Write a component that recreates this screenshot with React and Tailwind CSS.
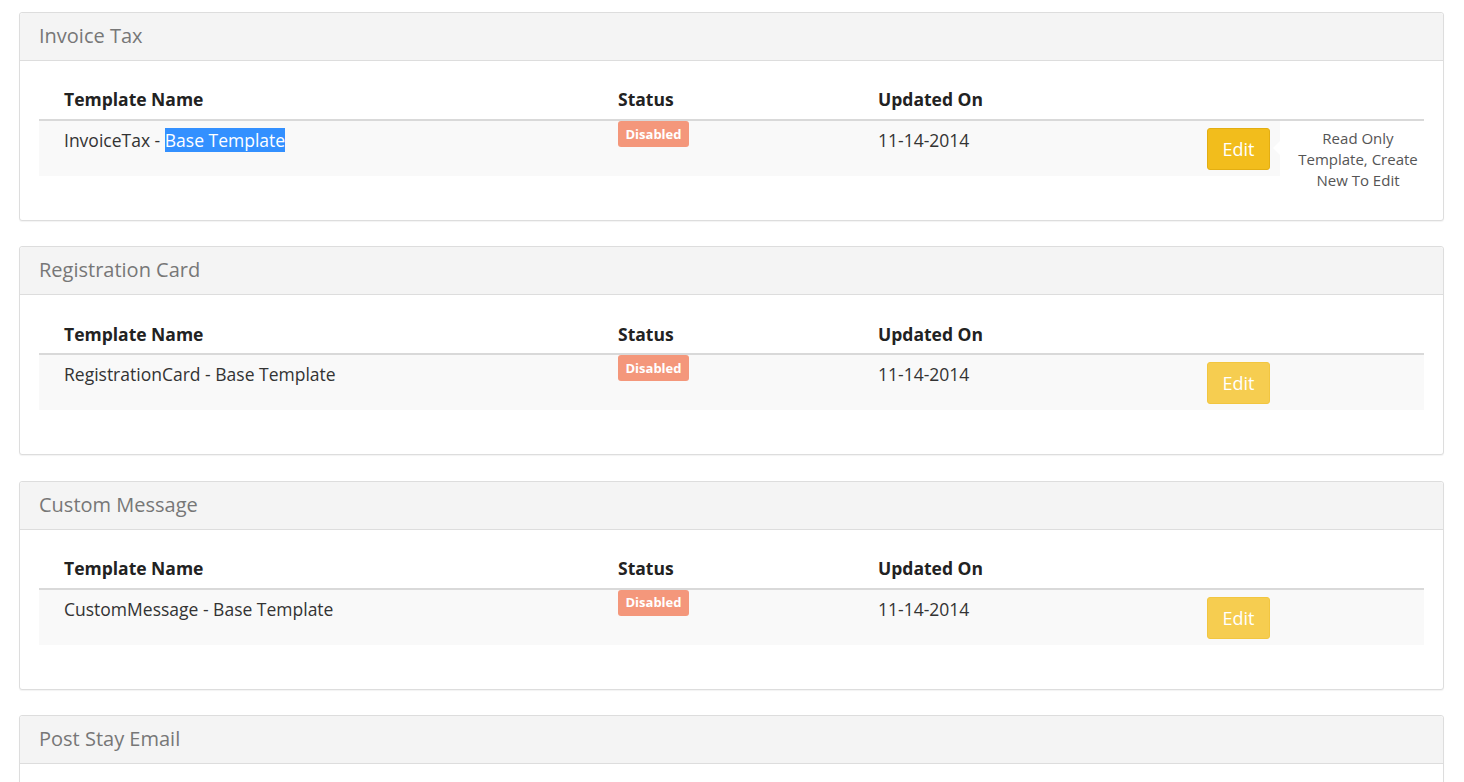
import React from "react";

const templates = [
  { title: "Invoice Tax", prefix: "InvoiceTax", date: "11-14-2014", active: true },
  { title: "Registration Card", prefix: "RegistrationCard", date: "11-14-2014" },
  { title: "Custom Message", prefix: "CustomMessage", date: "11-14-2014" },
  { title: "Post Stay Email", prefix: "PostStayEmail", date: "11-14-2014" },
];

const TemplatePanel = ({ item }) => {
  return (
    <div className="mb-[25.33px] border border-[#dddddd] rounded-[3px] bg-white shadow-[0_1px_1px_rgba(0,0,0,0.05)]">
      {/* Panel heading */}
      <div className="h-[48px] px-[19px] pb-[1px] flex items-center bg-[#f4f4f4] border-b border-[#dddddd] rounded-t-[3px]">
        <h3 className="text-[20px] leading-[26px] text-[#777777]">{item.title}</h3>
      </div>

      {/* Panel body */}
      <div className="px-[19px] pt-[20px] pb-[44px]">
        <div className="flex h-[38px] items-center pb-[1px] text-[17.5px] font-bold text-[#222222]">
          <div className="w-[554px] pl-[25px]">Template Name</div>
          <div className="w-[260px] pl-[25px]">Status</div>
          <div className="w-[329px] pl-[25px]">Updated On</div>
          <div className="flex-1" />
        </div>
        <div className="h-[2px] bg-[#d9d9d9]" />
        <div className="relative flex items-start h-[55px] bg-[#f9f9f9] text-[17.5px] leading-[26px] text-[#333333]">
          <div className="w-[554px] pl-[25px] pt-[6px]">
            {item.prefix} -{" "}
            {item.active ? (
              <span className="bg-[#3390ff] text-white">Base Template</span>
            ) : (
              "Base Template"
            )}
          </div>
          <div className="w-[260px] pl-[25px]">
            <span className="flex w-[71px] h-[26px] items-center justify-center rounded-[3px] bg-[#f4977b] text-[13px] font-bold leading-none text-white">
              Disabled
            </span>
          </div>
          <div className="w-[329px] pl-[25px] pt-[6px]">{item.date}</div>
          <div className="w-[98px] pl-[25px] pt-[7px]">
            <button
              className={`w-[63px] h-[42px] rounded-[3px] border text-[18px] text-white ${
                item.active
                  ? "bg-[#f2bd1c] border-[#e3ae12]"
                  : "bg-[#f6cd50] border-[#f2c640]"
              }`}
            >
              Edit
            </button>
          </div>
          <div className="flex-1" />

          {item.active && (
            <div className="absolute left-[1241px] top-0 w-[156px] bg-white pt-[7px] pb-[4px] text-center text-[15px] leading-[21px] text-[#555555]">
              <span className="absolute left-[-7px] top-[20px] w-0 h-0 border-y-[7px] border-y-transparent border-r-[7px] border-r-white" />
              Read Only
              <br />
              Template, Create
              <br />
              New To Edit
            </div>
          )}
        </div>
      </div>
    </div>
  );
};

const App = () => {
  return (
    <div
      className="min-h-screen bg-white px-[19px] pt-[12px] overflow-hidden"
      style={{ fontFamily: '"Open Sans", "Liberation Sans", sans-serif' }}
    >
      <div className="w-[1425px]">
        {templates.map((item) => (
          <TemplatePanel key={item.title} item={item} />
        ))}
      </div>
    </div>
  );
};

export default App;
